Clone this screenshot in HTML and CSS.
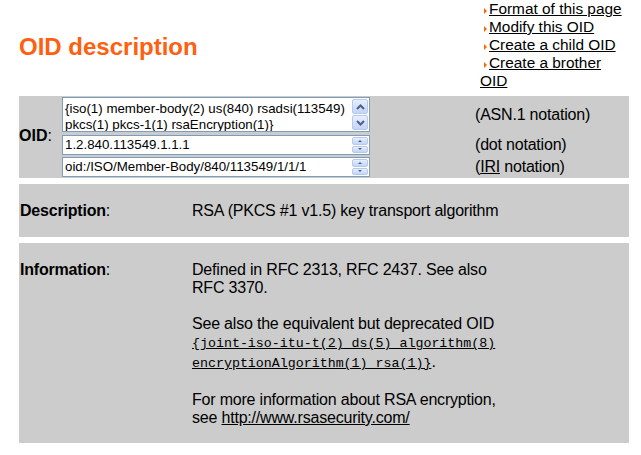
FILE: index.html
```html
<!DOCTYPE html>
<html lang="en">
<head>
  <meta charset="UTF-8">
  <title>OID description</title>
  <link rel="stylesheet" href="styles.css">
</head>
<body>

<div class="page">
  <div class="top">
    <h1 class="title">OID description</h1>
    <ul class="menu">
      <li><span class="arrow"></span><a href="#">Format of this page</a></li>
      <li><span class="arrow"></span><a href="#">Modify this OID</a></li>
      <li><span class="arrow"></span><a href="#">Create a child OID</a></li>
      <li><span class="arrow"></span><a href="#">Create a brother OID</a></li>
    </ul>
  </div>

  <!-- OID in the three notations -->
  <div class="box oid-box">
    <div class="oid-label"><b>OID</b>:</div>

    <div class="field area">
      <div class="field-text">{iso(1) member-body(2) us(840) rsadsi(113549) pkcs(1) pkcs-1(1) rsaEncryption(1)}</div>
      <div class="scroll">
        <span class="btn">
          <svg width="9" height="6" viewBox="0 0 9 6"><path d="M1 5 L4.5 1.5 L8 5" fill="none" stroke="#4d6185" stroke-width="2"/></svg>
        </span>
        <span class="btn">
          <svg width="9" height="6" viewBox="0 0 9 6"><path d="M1 1 L4.5 4.5 L8 1" fill="none" stroke="#4d6185" stroke-width="2"/></svg>
        </span>
      </div>
    </div>
    <div class="note">(ASN.1 notation)</div>

    <div class="field line">
      <div class="field-text">1.2.840.113549.1.1.1</div>
      <div class="spin">
        <span class="btn"><i class="tri up"></i></span>
        <span class="btn"><i class="tri down"></i></span>
      </div>
    </div>
    <div class="note">(dot notation)</div>

    <div class="field line">
      <div class="field-text">oid:/ISO/Member-Body/840/113549/1/1/1</div>
      <div class="spin">
        <span class="btn"><i class="tri up"></i></span>
        <span class="btn"><i class="tri down"></i></span>
      </div>
    </div>
    <div class="note">(<abbr>IRI</abbr> notation)</div>
  </div>

  <div class="box row">
    <div class="label"><b>Description</b>:</div>
    <div class="value">RSA (PKCS #1 v1.5) key transport algorithm</div>
  </div>

  <div class="box row info">
    <div class="label"><b>Information</b>:</div>
    <div class="value">
      <p>Defined in RFC 2313, RFC 2437. See also RFC 3370.</p>
      <p>See also the equivalent but deprecated OID <a href="#" class="code">{joint-iso-itu-t(2) ds(5) algorithm(8) encryptionAlgorithm(1) rsa(1)}</a>.</p>
      <p>For more information about RSA encryption, see <a href="#">http://www.rsasecurity.com/</a></p>
    </div>
  </div>
</div>

</body>
</html>
```

FILE: styles.css
```css
body {
  margin: 0;
  font-family: "Liberation Sans", Arial, sans-serif;
  font-size: 16px;
  color: #000;
  background: #fff;
}

a {
  color: #000;
}

.page {
  width: 610px;
  padding-left: 19px;
}

/* header: title + menu */
.top {
  display: flex;
  justify-content: space-between;
  align-items: flex-start;
  height: 96px;
}

.title {
  margin: 37px 0 0 0;
  font-size: 24px;
  font-weight: bold;
  color: #ff6010;
  line-height: 20px;
}

.menu {
  list-style: none;
  margin: 0;
  padding: 0;
  width: 149px;
  font-size: 15.4px;
  line-height: 18px;
}

.arrow {
  display: inline-block;
  width: 0;
  height: 0;
  border-left: 3px solid #f60;
  border-top: 3px solid transparent;
  border-bottom: 3px solid transparent;
  margin: 0 2px 0 4px;
}

/* grey boxes */
.box {
  background: #ccc;
  margin-bottom: 6px;
}

.oid-box {
  display: grid;
  grid-template-columns: 43px 308px 1fr;
  grid-template-rows: 38px 22px 22px;
  height: 82px;
}

.oid-label {
  grid-row: 1 / 4;
  align-self: center;
  padding-bottom: 2px;
}

.field {
  display: flex;
  background: #fff;
  border: 1px solid #7f9db9;
  font-size: 13.3px;
  box-sizing: border-box;
}

.field-text {
  flex: 1;
  overflow: hidden;
  white-space: nowrap;
  padding-left: 2px;
}

.area {
  margin-top: 1px;
  height: 35px;
}

.area .field-text {
  white-space: normal;
  line-height: 16px;
  padding-top: 3px;
}

.line {
  margin-top: 1px;
  height: 20px;
}

.line .field-text {
  line-height: 18px;
}

.scroll,
.spin {
  width: 16px;
  display: flex;
  flex-direction: column;
  gap: 1px;
  padding: 1px;
}

.btn {
  flex: 1;
  display: flex;
  align-items: center;
  justify-content: center;
  background: linear-gradient(#e8effd, #c3d4f8);
  border: 1px solid #b6c9ef;
  border-radius: 2px;
}

.tri {
  width: 0;
  height: 0;
  border-left: 2px solid transparent;
  border-right: 2px solid transparent;
}

.tri.up {
  border-bottom: 2px solid #4d6185;
}

.tri.down {
  border-top: 2px solid #4d6185;
}

.note {
  padding-left: 105px;
  align-self: center;
  letter-spacing: -0.2px;
}

.note abbr {
  text-decoration: underline;
}

/* label / value rows */
.row {
  display: flex;
  line-height: 18px;
  padding: 18px 0 17px 1px;
  letter-spacing: -0.2px;
}

.label {
  width: 172px;
}

.value {
  width: 325px;
}

.info {
  padding-bottom: 16px;
}

.info p {
  margin: 0 0 18px 0;
}

.info p:last-child {
  margin-bottom: 0;
}

.code {
  font-family: "Liberation Mono", "Courier New", monospace;
  font-size: 13.3px;
  letter-spacing: 0;
}
```
